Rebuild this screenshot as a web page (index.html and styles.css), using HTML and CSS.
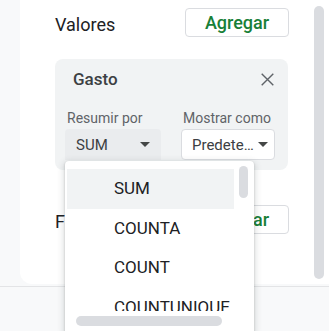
FILE: index.html
```html
<!DOCTYPE html>
<html lang="es">
<head>
<meta charset="utf-8">
<title>Valores</title>
<link rel="stylesheet" href="styles.css">
</head>
<body>
<div class="page">
  <div class="panel">
    <div class="content">
      <div class="section-head">
        <span class="section-title">Valores</span>
        <button class="add-btn">Agregar</button>
      </div>
      <div class="card">
        <div class="card-head">
          <span class="card-title">Gasto</span>
          <svg class="close" width="13" height="13" viewBox="0 0 13 13"><path d="M0.7 0.7L12.3 12.3M12.3 0.7L0.7 12.3" stroke="#5f6368" stroke-width="1.4" fill="none"/></svg>
        </div>
        <div class="fields">
          <div class="field field-sum">
            <div class="field-label">Resumir por</div>
            <div class="select select-active">
              <span class="select-value">SUM</span>
              <span class="caret"></span>
              <div class="menu">
                <div class="menu-view">
                  <div class="menu-items">
                    <div class="menu-item menu-item-hover">SUM</div>
                    <div class="menu-item">COUNTA</div>
                    <div class="menu-item">COUNT</div>
                    <div class="menu-item">COUNTUNIQUE</div>
                  </div>
                  <div class="menu-vtrack"><div class="menu-vthumb"></div></div>
                </div>
                <div class="menu-htrack"><div class="menu-hthumb"></div></div>
              </div>
            </div>
          </div>
          <div class="field field-show">
            <div class="field-label">Mostrar como</div>
            <div class="select select-outlined">
              <span class="select-value">Predete…</span>
              <span class="caret"></span>
            </div>
          </div>
        </div>
      </div>
      <div class="section-head section-second">
        <span class="section-title">Filtros</span>
        <button class="add-btn">Agregar</button>
      </div>
    </div>
    <div class="vscroll"><div class="vscroll-thumb"></div></div>
  </div>
  <div class="footer"></div>
</div>
</body>
</html>
```

FILE: styles.css
```css
html, body {
  margin: 0;
  padding: 0;
  overflow: hidden;
  background: #f8f9fa;
  font-family: Roboto, "Liberation Sans", sans-serif;
}

.page {
  width: 329px;
  height: 331px;
}

.panel {
  margin-left: 20px;
  width: 309px;
  height: 284px;
  background: #ffffff;
  border-bottom-left-radius: 12px;
  display: flex;
}

.content {
  width: 234px;
  padding: 8px 25px 0 35px;
}

.section-head {
  display: flex;
  justify-content: space-between;
  align-items: flex-start;
  height: 29px;
}

.section-second {
  margin-top: 35px;
}

.section-title {
  font-size: 18px;
  line-height: 29px;
  margin-top: 2px;
  color: #202124;
}

.add-btn {
  box-sizing: border-box;
  width: 104px;
  height: 29px;
  padding: 0;
  border: 1px solid #dadce0;
  border-radius: 4px;
  background: #ffffff;
  color: #188038;
  font-family: Roboto, "Liberation Sans", sans-serif;
  font-size: 18px;
  font-weight: 500;
  line-height: 27px;
}

.card {
  margin-top: 22px;
  width: 233px;
  height: 111px;
  box-sizing: border-box;
  background: #f1f3f4;
  border-radius: 8px;
  padding-top: 10px;
}

.card-head {
  display: flex;
  justify-content: space-between;
  align-items: center;
  height: 20px;
  padding: 0 14px 0 18px;
}

.card-title {
  font-size: 17px;
  font-weight: 500;
  line-height: 20px;
  color: #3c4043;
}

.close {
  display: block;
}

.fields {
  display: flex;
  gap: 20px;
  padding: 21px 13px 0 10px;
}

.field-sum {
  width: 96px;
}

.field-show {
  width: 94px;
}

.field-label {
  font-size: 14px;
  line-height: 16px;
  color: #5f6368;
  padding-left: 2px;
  margin-bottom: 3px;
  white-space: nowrap;
}

.select {
  position: relative;
  box-sizing: border-box;
  height: 31px;
  display: flex;
  align-items: center;
  justify-content: space-between;
  font-size: 15px;
  color: #3c4043;
}

.select-active {
  background: #eaecee;
  border-radius: 4px 4px 0 0;
  padding: 0 11px 0 11px;
}

.select-outlined {
  background: #ffffff;
  border: 1px solid #dadce0;
  border-radius: 4px;
  padding: 0 6px 0 10px;
}

.select-value {
  white-space: nowrap;
}

.caret {
  width: 0;
  height: 0;
  border-left: 5px solid transparent;
  border-right: 5px solid transparent;
  border-top: 5px solid #444746;
}

.menu {
  position: absolute;
  left: 0;
  top: 32px;
  width: 189px;
  height: 174px;
  background: #ffffff;
  border-radius: 4px;
  box-shadow: 0 1px 2px rgba(60, 64, 67, 0.3), 0 2px 6px 2px rgba(60, 64, 67, 0.15);
  z-index: 5;
}

.menu-view {
  display: flex;
  height: 150px;
  overflow: hidden;
}

.menu-items {
  width: 167px;
  margin-left: 2px;
  padding-top: 8px;
}

.menu-item {
  height: 39.5px;
  line-height: 39.5px;
  padding-left: 47px;
  font-size: 17px;
  color: #202124;
  white-space: nowrap;
}

.menu-item-hover {
  background: #f1f3f4;
}

.menu-vtrack {
  width: 20px;
  padding: 5px 0 0 5px;
  box-sizing: border-box;
}

.menu-vthumb {
  width: 9px;
  height: 32px;
  border-radius: 5px;
  background: #dadce0;
}

.menu-htrack {
  padding: 5px 0 0 11px;
}

.menu-hthumb {
  width: 146px;
  height: 10px;
  border-radius: 5px;
  background: #dadce0;
}

.vscroll {
  width: 10px;
  padding-top: 6px;
}

.vscroll-thumb {
  width: 10px;
  height: 273px;
  border-radius: 5px;
  background: #dadce0;
}

.footer {
  margin-top: 2px;
  border-top: 1px solid #e3e4e6;
  height: 44px;
}
```
